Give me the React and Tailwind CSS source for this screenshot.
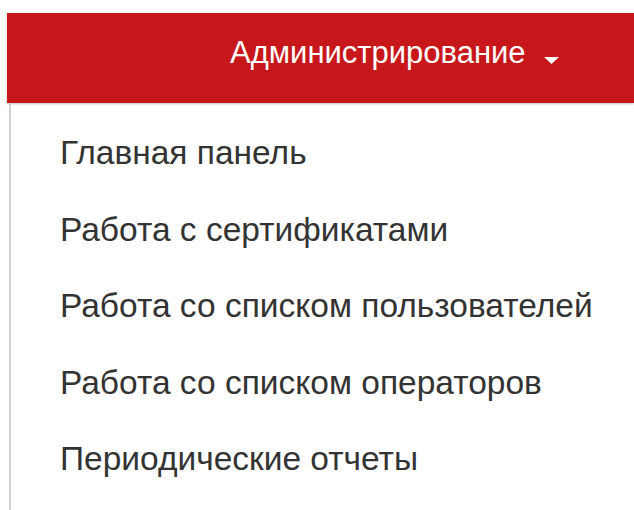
import React from 'react'

const items = [
  'Главная панель',
  'Работа с сертификатами',
  'Работа со списком пользователей',
  'Работа со списком операторов',
  'Периодические отчеты',
]

function App() {
  return (
    <div className="min-h-screen bg-white pt-[13px] pl-[7px] font-['Liberation_Sans',Arial,sans-serif]">
      <div className="h-[90px] bg-[#c8171a] flex items-start pt-[24px] pl-[223px] shadow-[0_1px_2px_rgba(0,0,0,0.25)]">
        <span className="text-white text-[31px] leading-[31px]">Администрирование</span>
        <svg className="ml-[18px] mt-[20px]" width="15" height="7" viewBox="0 0 15 7">
          <path d="M0 0 H15 L7.5 7 Z" fill="#fff" />
        </svg>
      </div>
      <div className="ml-[2px] border-l-2 border-[#d0d0d0] pl-[49px] pt-[12px] h-[410px]">
        <ul>
          {items.map(item => (
            <li key={item} className="text-[33.5px] leading-[76.5px] text-[#333]">
              {item}
            </li>
          ))}
        </ul>
      </div>
    </div>
  )
}

export default App
